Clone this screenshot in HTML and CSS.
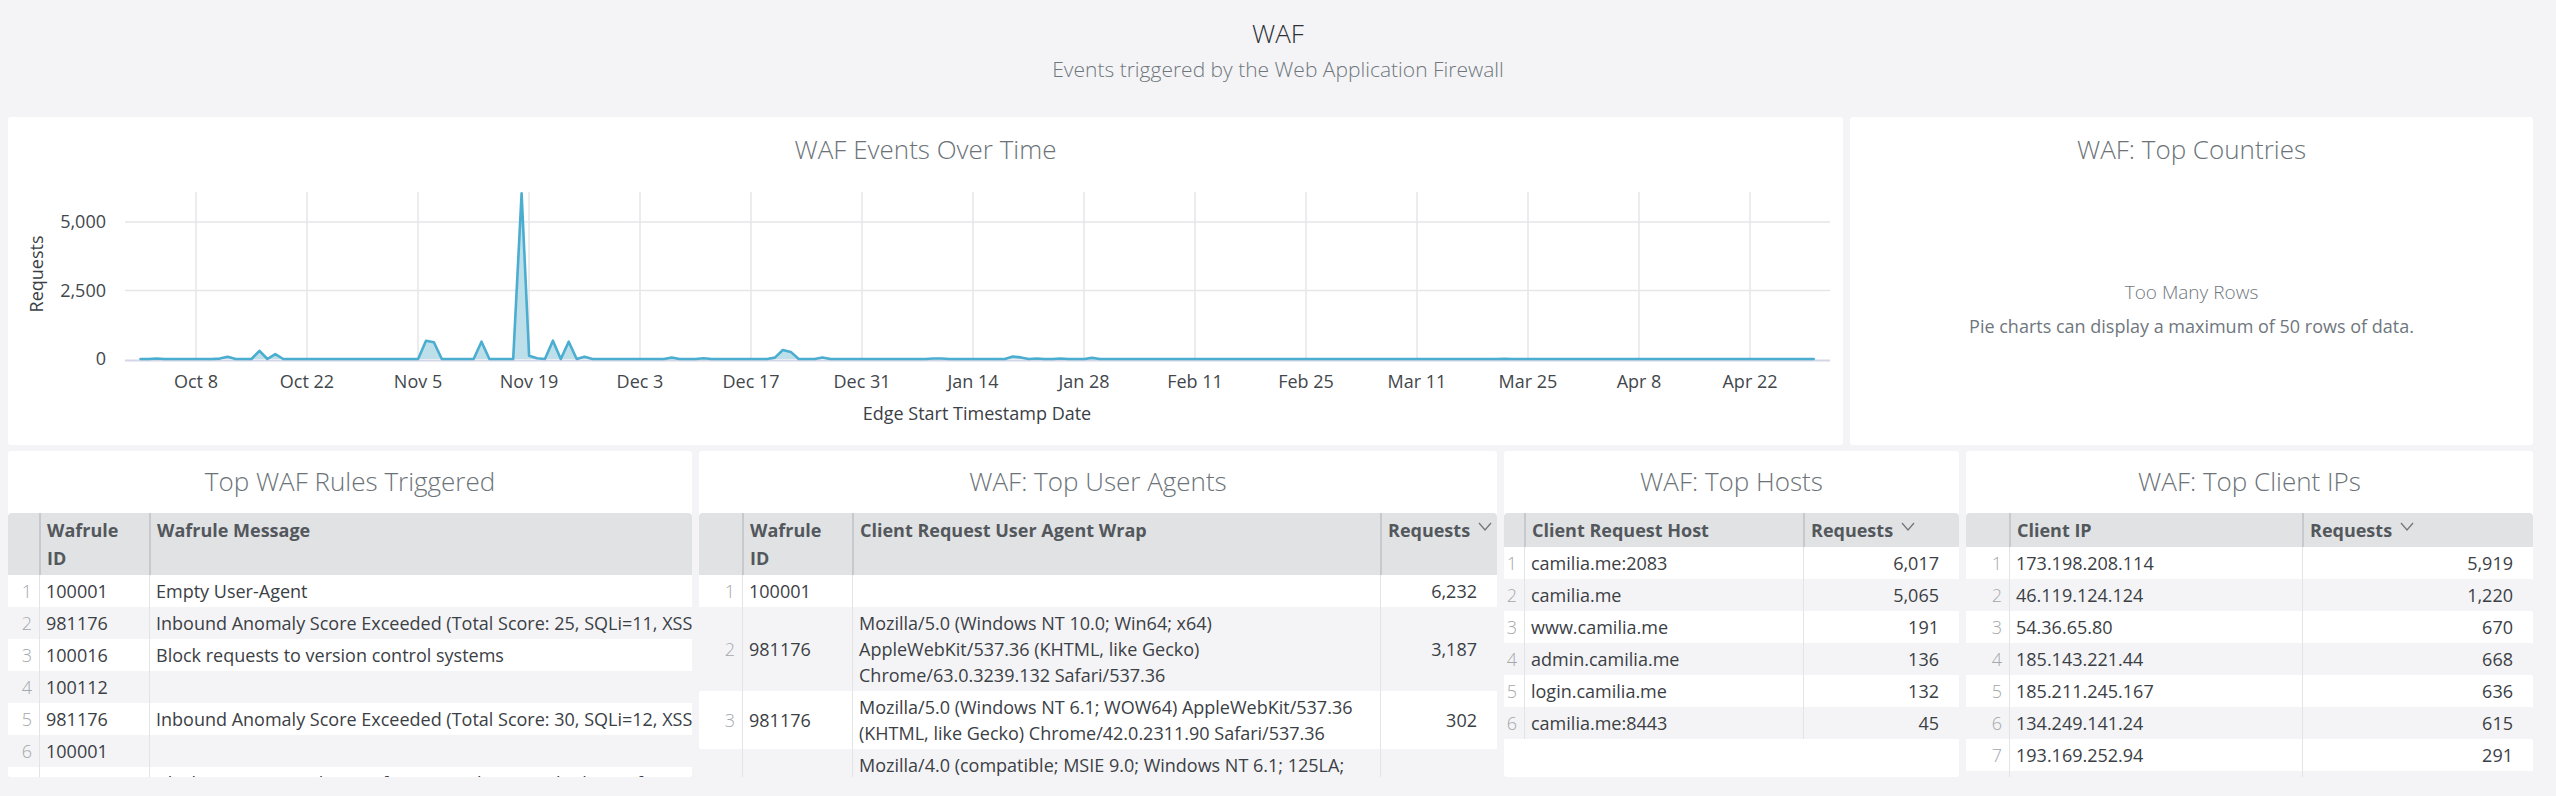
FILE: index.html
```html
<!DOCTYPE html>
<html lang="en">
<head>
<meta charset="utf-8">
<title>WAF</title>
<link rel="stylesheet" href="styles.css">
</head>
<body>
<header class="dash-head">
  <h1 class="dash-title">WAF</h1>
  <p class="dash-sub">Events triggered by the Web Application Firewall</p>
</header>

<section class="row row-top">
  <div class="panel">
    <h2 class="panel-title title-top">WAF Events Over Time</h2>
    <svg class="chart" width="1835" height="264" viewBox="0 0 1835 264">
      <g class="grid">
        <line x1="188" y1="11" x2="188" y2="178"/>
        <line x1="299" y1="11" x2="299" y2="178"/>
        <line x1="410" y1="11" x2="410" y2="178"/>
        <line x1="521" y1="11" x2="521" y2="178"/>
        <line x1="632" y1="11" x2="632" y2="178"/>
        <line x1="743" y1="11" x2="743" y2="178"/>
        <line x1="854" y1="11" x2="854" y2="178"/>
        <line x1="965" y1="11" x2="965" y2="178"/>
        <line x1="1076" y1="11" x2="1076" y2="178"/>
        <line x1="1187" y1="11" x2="1187" y2="178"/>
        <line x1="1298" y1="11" x2="1298" y2="178"/>
        <line x1="1409" y1="11" x2="1409" y2="178"/>
        <line x1="1520" y1="11" x2="1520" y2="178"/>
        <line x1="1631" y1="11" x2="1631" y2="178"/>
        <line x1="1742" y1="11" x2="1742" y2="178"/>
        <line x1="117" y1="41" x2="1822" y2="41"/>
        <line x1="117" y1="109.5" x2="1822" y2="109.5"/>
      </g>
      <line class="axis" x1="117" y1="179.5" x2="1822" y2="179.5"/>
      <path class="area" d="M132.5,178 L140.4,178 L148.4,177.5 L156.3,178 L203.9,178 L211.8,177.6 L219.7,175.8 L227.7,178 L243.5,178 L251.5,169.8 L259.4,178 L267.3,173.1 L275.2,178 L410.1,178 L418,159.7 L425.9,161.3 L433.8,178 L465.6,178 L473.5,160.7 L481.4,178 L505.2,178 L513.6,12.2 L521.1,174.7 L529,177.3 L536.9,178 L544.9,159.7 L552.8,178 L560.7,160.7 L568.7,178 L576.6,175.7 L584.5,178 L655.9,178 L663.8,176.6 L671.7,178 L687.6,178 L695.5,177.2 L703.5,178 L759,178 L766.9,176.6 L774.8,169 L782.8,170.9 L790.7,178 L806.6,178 L814.5,176.4 L822.4,178 L917.6,178 L925.5,177.5 L933.4,177.5 L941.4,178 L996.9,178 L1004.8,175.5 L1012.7,176.4 L1020.7,178 L1028.6,177.5 L1036.5,178 L1044.5,178 L1052.4,177.5 L1060.3,178 L1076.2,178 L1084.1,176.9 L1092,178 L1488.5,178 L1496.5,177.7 L1504.4,178 L1805.7,178 Z"/>
      <path class="line" d="M132.5,178 L140.4,178 L148.4,177.5 L156.3,178 L203.9,178 L211.8,177.6 L219.7,175.8 L227.7,178 L243.5,178 L251.5,169.8 L259.4,178 L267.3,173.1 L275.2,178 L410.1,178 L418,159.7 L425.9,161.3 L433.8,178 L465.6,178 L473.5,160.7 L481.4,178 L505.2,178 L513.6,12.2 L521.1,174.7 L529,177.3 L536.9,178 L544.9,159.7 L552.8,178 L560.7,160.7 L568.7,178 L576.6,175.7 L584.5,178 L655.9,178 L663.8,176.6 L671.7,178 L687.6,178 L695.5,177.2 L703.5,178 L759,178 L766.9,176.6 L774.8,169 L782.8,170.9 L790.7,178 L806.6,178 L814.5,176.4 L822.4,178 L917.6,178 L925.5,177.5 L933.4,177.5 L941.4,178 L996.9,178 L1004.8,175.5 L1012.7,176.4 L1020.7,178 L1028.6,177.5 L1036.5,178 L1044.5,178 L1052.4,177.5 L1060.3,178 L1076.2,178 L1084.1,176.9 L1092,178 L1488.5,178 L1496.5,177.7 L1504.4,178 L1805.7,178"/>
      <g class="ytick">
        <text x="98" y="47">5,000</text>
        <text x="98" y="116">2,500</text>
        <text x="98" y="184">0</text>
      </g>
      <g class="xtick">
        <text x="188" y="207">Oct 8</text>
        <text x="299" y="207">Oct 22</text>
        <text x="410" y="207">Nov 5</text>
        <text x="521" y="207">Nov 19</text>
        <text x="632" y="207">Dec 3</text>
        <text x="743" y="207">Dec 17</text>
        <text x="854" y="207">Dec 31</text>
        <text x="965" y="207">Jan 14</text>
        <text x="1076" y="207">Jan 28</text>
        <text x="1187" y="207">Feb 11</text>
        <text x="1298" y="207">Feb 25</text>
        <text x="1409" y="207">Mar 11</text>
        <text x="1520" y="207">Mar 25</text>
        <text x="1631" y="207">Apr 8</text>
        <text x="1742" y="207">Apr 22</text>
      </g>
      <text class="axis-title" transform="translate(35 93) rotate(-90)" y="0">Requests</text>
      <text class="axis-title" x="969" y="239">Edge Start Timestamp Date</text>
    </svg>
  </div>

  <div class="panel">
    <h2 class="panel-title title-top">WAF: Top Countries</h2>
    <div class="note">
      <p class="note-head">Too Many Rows</p>
      <p class="note-body">Pie charts can display a maximum of 50 rows of data.</p>
    </div>
  </div>
</section>

<section class="row row-bottom">
  <div class="panel">
    <h2 class="panel-title">Top WAF Rules Triggered</h2>
    <table class="tbl">
      <thead>
        <tr><th class="idx w31"></th><th class="w110">Wafrule ID</th><th>Wafrule Message</th></tr>
      </thead>
      <tbody>
        <tr><td class="idx">1</td><td>100001</td><td class="clip">Empty User-Agent</td></tr>
        <tr><td class="idx">2</td><td>981176</td><td class="clip">Inbound Anomaly Score Exceeded (Total Score: 25, SQLi=11, XSS=0): Last Matched Message: 981245-Detects basic SQL authentication bypass attempts 2/3</td></tr>
        <tr><td class="idx">3</td><td>100016</td><td class="clip">Block requests to version control systems</td></tr>
        <tr><td class="idx">4</td><td>100112</td><td class="clip"></td></tr>
        <tr><td class="idx">5</td><td>981176</td><td class="clip">Inbound Anomaly Score Exceeded (Total Score: 30, SQLi=12, XSS=0): Last Matched Message: 981243-Detects classic SQL injection probings 2/2</td></tr>
        <tr><td class="idx">6</td><td>100001</td><td class="clip"></td></tr>
        <tr><td class="idx">7</td><td>100030</td><td class="clip">Block attempts to obtain information that may disclose information about the server</td></tr>
        <tr><td class="idx">8</td><td>100112</td><td class="clip"></td></tr>
      </tbody>
    </table>
  </div>

  <div class="panel">
    <h2 class="panel-title">WAF: Top User Agents</h2>
    <table class="tbl">
      <thead>
        <tr><th class="idx w43"></th><th class="w110">Wafrule ID</th><th class="w528">Client Request User Agent Wrap</th><th class="req">Requests<svg class="sort" width="14" height="9" viewBox="0 0 14 9"><polyline points="1,1 7,8 13,1"/></svg></th></tr>
      </thead>
      <tbody>
        <tr><td class="idx">1</td><td>100001</td><td></td><td class="num">6,232</td></tr>
        <tr><td class="idx">2</td><td>981176</td><td>Mozilla/5.0 (Windows NT 10.0; Win64; x64) AppleWebKit/537.36 (KHTML, like Gecko) Chrome/63.0.3239.132 Safari/537.36</td><td class="num">3,187</td></tr>
        <tr><td class="idx">3</td><td>981176</td><td>Mozilla/5.0 (Windows NT 6.1; WOW64) AppleWebKit/537.36 (KHTML, like Gecko) Chrome/42.0.2311.90 Safari/537.36</td><td class="num">302</td></tr>
        <tr><td class="idx">4</td><td>981176</td><td>Mozilla/4.0 (compatible; MSIE 9.0; Windows NT 6.1; 125LA; .NET CLR 2.0.50727; .NET CLR 3.0.04506.648; .NET CLR 3.5.21022)</td><td class="num">203</td></tr>
      </tbody>
    </table>
  </div>

  <div class="panel">
    <h2 class="panel-title">WAF: Top Hosts</h2>
    <table class="tbl">
      <thead>
        <tr><th class="idx w20"></th><th class="w279">Client Request Host</th><th class="req">Requests<svg class="sort" width="14" height="9" viewBox="0 0 14 9"><polyline points="1,1 7,8 13,1"/></svg></th></tr>
      </thead>
      <tbody>
        <tr><td class="idx">1</td><td>camilia.me:2083</td><td class="num">6,017</td></tr>
        <tr><td class="idx">2</td><td>camilia.me</td><td class="num">5,065</td></tr>
        <tr><td class="idx">3</td><td>www.camilia.me</td><td class="num">191</td></tr>
        <tr><td class="idx">4</td><td>admin.camilia.me</td><td class="num">136</td></tr>
        <tr><td class="idx">5</td><td>login.camilia.me</td><td class="num">132</td></tr>
        <tr><td class="idx">6</td><td>camilia.me:8443</td><td class="num">45</td></tr>
      </tbody>
    </table>
  </div>

  <div class="panel">
    <h2 class="panel-title">WAF: Top Client IPs</h2>
    <table class="tbl">
      <thead>
        <tr><th class="idx w43"></th><th class="w293">Client IP</th><th class="req">Requests<svg class="sort" width="14" height="9" viewBox="0 0 14 9"><polyline points="1,1 7,8 13,1"/></svg></th></tr>
      </thead>
      <tbody>
        <tr><td class="idx">1</td><td>173.198.208.114</td><td class="num">5,919</td></tr>
        <tr><td class="idx">2</td><td>46.119.124.124</td><td class="num">1,220</td></tr>
        <tr><td class="idx">3</td><td>54.36.65.80</td><td class="num">670</td></tr>
        <tr><td class="idx">4</td><td>185.143.221.44</td><td class="num">668</td></tr>
        <tr><td class="idx">5</td><td>185.211.245.167</td><td class="num">636</td></tr>
        <tr><td class="idx">6</td><td>134.249.141.24</td><td class="num">615</td></tr>
        <tr><td class="idx">7</td><td>193.169.252.94</td><td class="num">291</td></tr>
        <tr><td class="idx">8</td><td>185.234.219.12</td><td class="num">274</td></tr>
      </tbody>
    </table>
  </div>
</section>
</body>
</html>
```

FILE: styles.css
```css
html, body {
  margin: 0;
  padding: 0;
}

body {
  width: 2556px;
  height: 796px;
  overflow: hidden;
  background: #f4f4f6;
  font-family: "Open Sans", "Noto Sans", "DejaVu Sans", sans-serif;
  color: #3b4045;
}

/* dashboard header */
.dash-head {
  height: 117px;
  box-sizing: border-box;
  padding-top: 17px;
  text-align: center;
}

.dash-title {
  margin: 0;
  font-size: 26px;
  font-weight: 300;
  line-height: 32px;
  color: #2c3136;
}

.dash-sub {
  margin: 6px 0 0;
  font-size: 21px;
  font-weight: 300;
  line-height: 28px;
  color: #6f777d;
}

/* rows of tiles */
.row {
  display: grid;
  column-gap: 7px;
  padding-left: 8px;
}

.row-top {
  grid-template-columns: 1835px 683px;
  height: 328px;
}

.row-bottom {
  grid-template-columns: 684px 798px 455px 567px;
  height: 326px;
  margin-top: 6px;
}

.panel {
  background: #ffffff;
  border-radius: 3px;
  overflow: hidden;
  display: flex;
  flex-direction: column;
  min-width: 0;
}

.panel-title {
  margin: 0;
  flex: none;
  height: 62px;
  line-height: 60px;
  font-size: 26px;
  font-weight: 300;
  color: #6b7378;
  text-align: center;
  white-space: nowrap;
}

.title-top {
  height: 64px;
  line-height: 64px;
}

/* chart */
.chart {
  display: block;
  flex: none;
}

.chart .grid line {
  stroke: #e6e6e8;
  stroke-width: 1.5;
}

.chart .axis {
  stroke: #d3d6e6;
  stroke-width: 2;
}

.chart .area {
  fill: #bddfea;
  stroke: none;
}

.chart .line {
  fill: none;
  stroke: #4badd0;
  stroke-width: 2.6;
  stroke-linejoin: round;
  stroke-linecap: round;
}

.chart text {
  font-family: "Open Sans", "Noto Sans", sans-serif;
  font-size: 18px;
  fill: #42474c;
}

.chart .ytick text {
  text-anchor: end;
}

.chart .xtick text {
  text-anchor: middle;
}

.chart .axis-title {
  text-anchor: middle;
  fill: #3b4045;
}

/* pie chart notice */
.note {
  flex: 1;
  display: flex;
  flex-direction: column;
  align-items: center;
  padding-top: 98px;
}

.note-head {
  margin: 0;
  font-size: 19px;
  font-weight: 300;
  line-height: 26px;
  color: #6f777d;
}

.note-body {
  margin: 8px 0 0;
  font-size: 18px;
  font-weight: 400;
  line-height: 26px;
  color: #6f777d;
}

/* tables */
.tbl {
  width: 100%;
  table-layout: fixed;
  border-collapse: separate;
  border-spacing: 0;
  font-size: 18px;
}

.tbl th,
.tbl td {
  box-sizing: border-box;
}

.tbl th {
  background: #e1e2e4;
  color: #53585c;
  font-weight: 700;
  text-align: left;
  vertical-align: top;
  line-height: 28px;
  padding: 3px 20px 3px 6px;
  border-left: 2px solid #c6c9cd;
  white-space: normal;
}

.tbl th.idx {
  border-left: none;
  padding: 0;
}

.tbl th.req {
  padding-right: 2px;
  white-space: nowrap;
}

.tbl th:first-child {
  border-top-left-radius: 4px;
}

.tbl th:last-child {
  border-top-right-radius: 4px;
}

.tbl td {
  background: #ffffff;
  line-height: 26px;
  padding: 3px 6px;
  vertical-align: middle;
  border-left: 1px solid #e2e3e5;
  color: #3b4045;
}

.tbl tbody tr:nth-child(even) td {
  background: #f4f4f6;
}

.tbl td.idx {
  border-left: none;
  padding: 3px 7px 3px 0;
  text-align: right;
  color: #a3a8ac;
  font-weight: 300;
}

.tbl td.num {
  text-align: right;
  padding-right: 20px;
}

.tbl td.clip {
  white-space: nowrap;
  overflow: hidden;
  text-overflow: clip;
}

.sort {
  display: inline-block;
  margin-left: 8px;
  vertical-align: 6px;
}

.sort polyline {
  fill: none;
  stroke: #6f7579;
  stroke-width: 1.2;
}

/* column widths */
.w20 { width: 20px; }
.w31 { width: 31px; }
.w43 { width: 43px; }
.w110 { width: 110px; }
.w279 { width: 279px; }
.w293 { width: 293px; }
.w528 { width: 528px; }
```
